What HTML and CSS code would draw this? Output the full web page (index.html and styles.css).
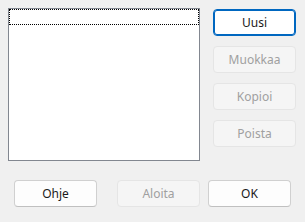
FILE: index.html
```html
<!DOCTYPE html>
<html lang="fi">
<head>
    <meta charset="UTF-8">
    <title>Profiilit</title>
    <link rel="stylesheet" href="styles.css">
</head>
<body>
    <div class="dialog">
        <!-- List and side buttons -->
        <div class="top-row">
            <div class="list-box">
                <div class="list-item focused"></div>
            </div>
            <div class="side-buttons">
                <button class="btn default">Uusi</button>
                <button class="btn" disabled>Muokkaa</button>
                <button class="btn" disabled>Kopioi</button>
                <button class="btn" disabled>Poista</button>
            </div>
        </div>

        <!-- Bottom buttons -->
        <div class="bottom-row">
            <button class="btn">Ohje</button>
            <div class="right-buttons">
                <button class="btn" disabled>Aloita</button>
                <button class="btn">OK</button>
            </div>
        </div>
    </div>
</body>
</html>
```

FILE: styles.css
```css
/* Page */
body {
    margin: 0;
    background: #f0f0f0;
    font-family: "Noto Sans", "Open Sans", sans-serif;
    font-size: 12px;
    color: #000;
}

.dialog {
    padding: 8px;
    width: 305px;
    height: 222px;
    box-sizing: border-box;
}

/* Top row */
.top-row {
    display: flex;
    align-items: flex-start;
}

.list-box {
    width: 192px;
    height: 153px;
    box-sizing: border-box;
    border: 1px solid #828790;
    background: #fff;
    padding: 0;
}

.list-item {
    height: 16px;
    box-sizing: border-box;
}

.list-item.focused {
    border: 1px dotted #000;
}

.side-buttons {
    display: flex;
    flex-direction: column;
    gap: 10px;
    margin-left: 13px;
    margin-top: 1px;
}

/* Buttons */
.btn {
    width: 83px;
    height: 27px;
    box-sizing: border-box;
    background: #fdfdfd;
    border: 1px solid #d0d0d0;
    border-bottom-color: #c0c0c0;
    border-radius: 4px;
    font-family: inherit;
    font-size: 12px;
    color: #1a1a1a;
    padding: 0;
    line-height: 1;
}

.btn.default {
    border: 1px solid #0067c0;
    box-shadow: inset 0 0 0 1px #0067c0;
    background: #fff;
}

.btn:disabled {
    background: #f5f5f5;
    border-color: #e5e5e5;
    color: #a0a0a0;
}

/* Bottom row */
.bottom-row {
    display: flex;
    justify-content: space-between;
    align-items: center;
    margin-top: 19px;
    padding-left: 6px;
    padding-right: 6px;
}

.right-buttons {
    display: flex;
    gap: 8px;
}
```
